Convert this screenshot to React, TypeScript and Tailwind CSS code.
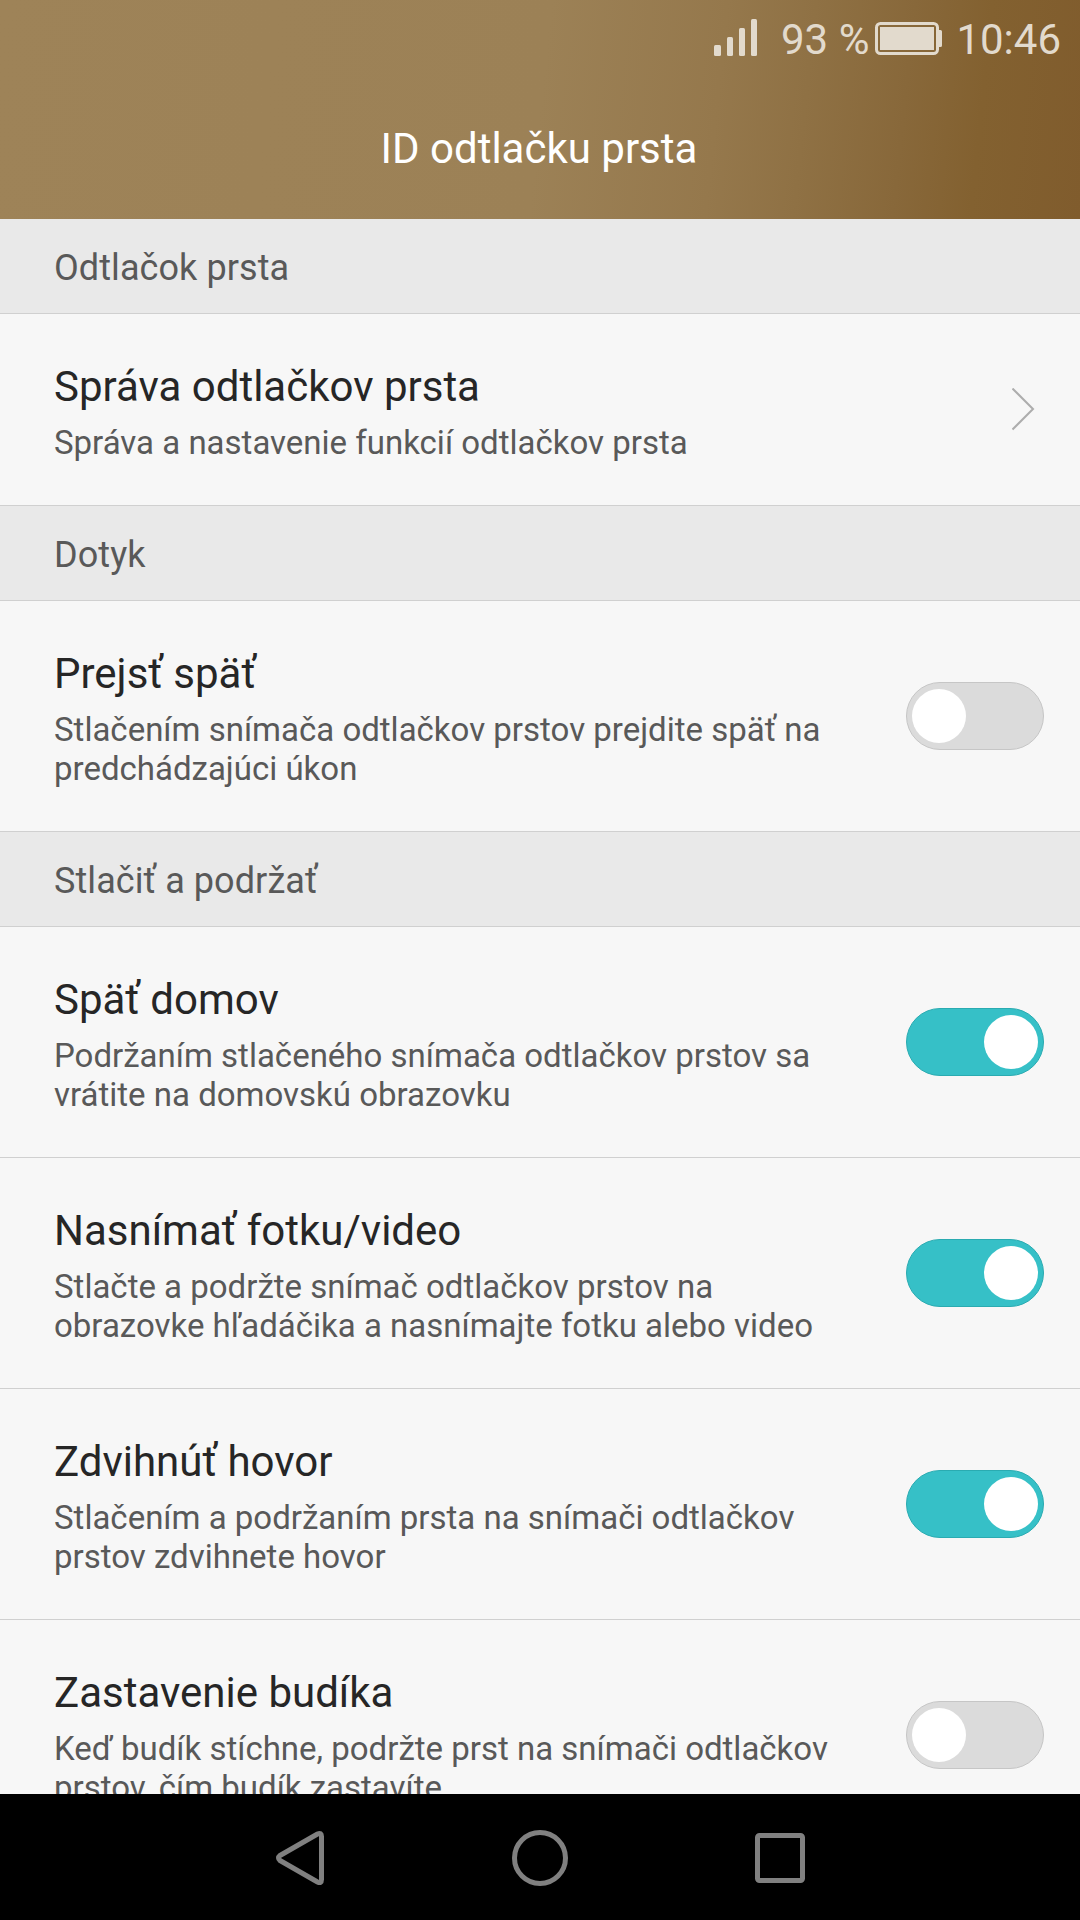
import React, { useState } from 'react';

interface SettingItem {
    id: string;
    title: string;
    summary: string;
    type: 'link' | 'switch';
    enabled?: boolean;
}

interface SettingGroup {
    header: string;
    items: SettingItem[];
}

const groups: SettingGroup[] = [
    {
        header: 'Odtlačok prsta',
        items: [
            {
                id: 'manage',
                title: 'Správa odtlačkov prsta',
                summary: 'Správa a nastavenie funkcií odtlačkov prsta',
                type: 'link',
            },
        ],
    },
    {
        header: 'Dotyk',
        items: [
            {
                id: 'back',
                title: 'Prejsť späť',
                summary: 'Stlačením snímača odtlačkov prstov prejdite späť na predchádzajúci úkon',
                type: 'switch',
                enabled: false,
            },
        ],
    },
    {
        header: 'Stlačiť a podržať',
        items: [
            {
                id: 'home',
                title: 'Späť domov',
                summary: 'Podržaním stlačeného snímača odtlačkov prstov sa vrátite na domovskú obrazovku',
                type: 'switch',
                enabled: true,
            },
            {
                id: 'camera',
                title: 'Nasnímať fotku/video',
                summary: 'Stlačte a podržte snímač odtlačkov prstov na obrazovke hľadáčika a nasnímajte fotku alebo video',
                type: 'switch',
                enabled: true,
            },
            {
                id: 'call',
                title: 'Zdvihnúť hovor',
                summary: 'Stlačením a podržaním prsta na snímači odtlačkov prstov zdvihnete hovor',
                type: 'switch',
                enabled: true,
            },
            {
                id: 'alarm',
                title: 'Zastavenie budíka',
                summary: 'Keď budík stíchne, podržte prst na snímači odtlačkov prstov, čím budík zastavíte',
                type: 'switch',
                enabled: false,
            },
        ],
    },
];

const StatusBar: React.FC = () => (
    <div className="flex h-[75px] items-start justify-end pr-[19px] text-[42px] leading-[49px] text-[#e2dacd]">
        <svg className="mt-[19px] mr-[24px] h-[37px] w-[43px]" viewBox="0 0 43 37" fill="currentColor">
            <rect x="0" y="26" width="7" height="11" rx="1.5" />
            <rect x="13" y="18" width="6" height="19" rx="1.5" />
            <rect x="25" y="9" width="6" height="28" rx="1.5" />
            <rect x="37" y="0" width="6" height="37" rx="1.5" />
        </svg>
        <span className="mt-[15px]">93 %</span>
        <svg className="mt-[22px] mr-[14px] ml-[6px] h-[33px] w-[67px]" viewBox="0 0 67 33" fill="currentColor">
            <rect x="1.5" y="1.5" width="61" height="30" rx="4" fill="none" stroke="currentColor" strokeWidth="3" />
            <rect x="5" y="5" width="54" height="23" />
            <path d="M64 8h1.5a1.5 1.5 0 0 1 1.5 1.5v14a1.5 1.5 0 0 1-1.5 1.5H64z" />
        </svg>
        <span className="mt-[15px]">10:46</span>
    </div>
);

const Switch: React.FC<{ checked: boolean; onChange: () => void }> = ({ checked, onChange }) => (
    <button
        role="switch"
        aria-checked={checked}
        onClick={onChange}
        className={`flex h-[68px] w-[138px] shrink-0 items-center rounded-full border px-[5px] ${checked
            ? 'justify-end border-[#2aabb1] bg-[#36c0c7]'
            : 'justify-start border-[#c6c6c6] bg-[#dbdbdb]'
            }`}
    >
        <span className="size-[54px] rounded-full bg-white" />
    </button>
);

const NavigationBar: React.FC = () => (
    <div className="flex h-[126px] shrink-0 items-center justify-center gap-[184px] bg-black pt-[2px] text-[#808080]">
        <svg className="size-[56px]" viewBox="0 0 56 56" fill="none" stroke="currentColor" strokeWidth="5" strokeLinejoin="round">
            <path d="M8 25.5 45.5 4Q49.5 2 49.5 6.5V49.5Q49.5 54 45.5 52L8 30.5Q5 28 8 25.5Z" />
        </svg>
        <svg className="size-[56px]" viewBox="0 0 56 56" fill="none" stroke="currentColor" strokeWidth="5">
            <circle cx="28" cy="28" r="25.5" />
        </svg>
        <svg className="size-[56px]" viewBox="0 0 56 56" fill="none" stroke="currentColor" strokeWidth="5">
            <rect x="5.5" y="5.5" width="45" height="45" rx="2" />
        </svg>
    </div>
);

const App: React.FC = () => {
    const [enabled, setEnabled] = useState<Record<string, boolean>>(() =>
        Object.fromEntries(groups.flatMap((g) => g.items).map((item) => [item.id, !!item.enabled]))
    );

    const toggle = (id: string) => setEnabled((prev) => ({ ...prev, [id]: !prev[id] }));

    return (
        <div className="flex h-[1920px] w-[1080px] flex-col overflow-hidden bg-[#f7f7f7] font-[Roboto,sans-serif]">
            <header className="h-[219px] shrink-0 bg-[linear-gradient(96deg,#9e8358_0%,#9c8156_50%,#95784c_66%,#8f7144_74%,#88683a_83%,#836130_90%,#805c2d_100%)]">
                <StatusBar />
                <h1 className="mt-[49px] pr-[2px] text-center text-[42px] leading-[49px] text-white">ID odtlačku prsta</h1>
            </header>

            <main className="min-h-0 flex-1 overflow-hidden">
                {groups.map((group) => (
                    <section key={group.header}>
                        <h2 className="h-[95px] border-b border-[#d0d0d0] bg-[#e9e9e9] pt-[28px] pl-[54px] text-[36px] leading-[42px] tracking-[0.08px] text-[#595959]">
                            {group.header}
                        </h2>
                        {group.items.map((item) => (
                            <div
                                key={item.id}
                                className="flex items-center justify-between border-b border-[#d0d0d0] pr-[36px] pl-[54px]"
                            >
                                <div className="w-[790px] pt-[48px] pb-[43px]">
                                    <h3 className="text-[42px] leading-[49px] text-[#262626]">{item.title}</h3>
                                    <p className="mt-[12px] text-[33px] leading-[39px] text-[#595959]">{item.summary}</p>
                                </div>
                                {item.type === 'switch' ? (
                                    <Switch checked={enabled[item.id]} onChange={() => toggle(item.id)} />
                                ) : (
                                    <svg className="mr-[8px] h-[43px] w-[24px]" viewBox="0 0 24 43" fill="none" stroke="#adadad" strokeWidth="2">
                                        <path d="M0.5 0.5 21 21 0.5 41.5" />
                                    </svg>
                                )}
                            </div>
                        ))}
                    </section>
                ))}
            </main>

            <NavigationBar />
        </div>
    );
};

export default App;
